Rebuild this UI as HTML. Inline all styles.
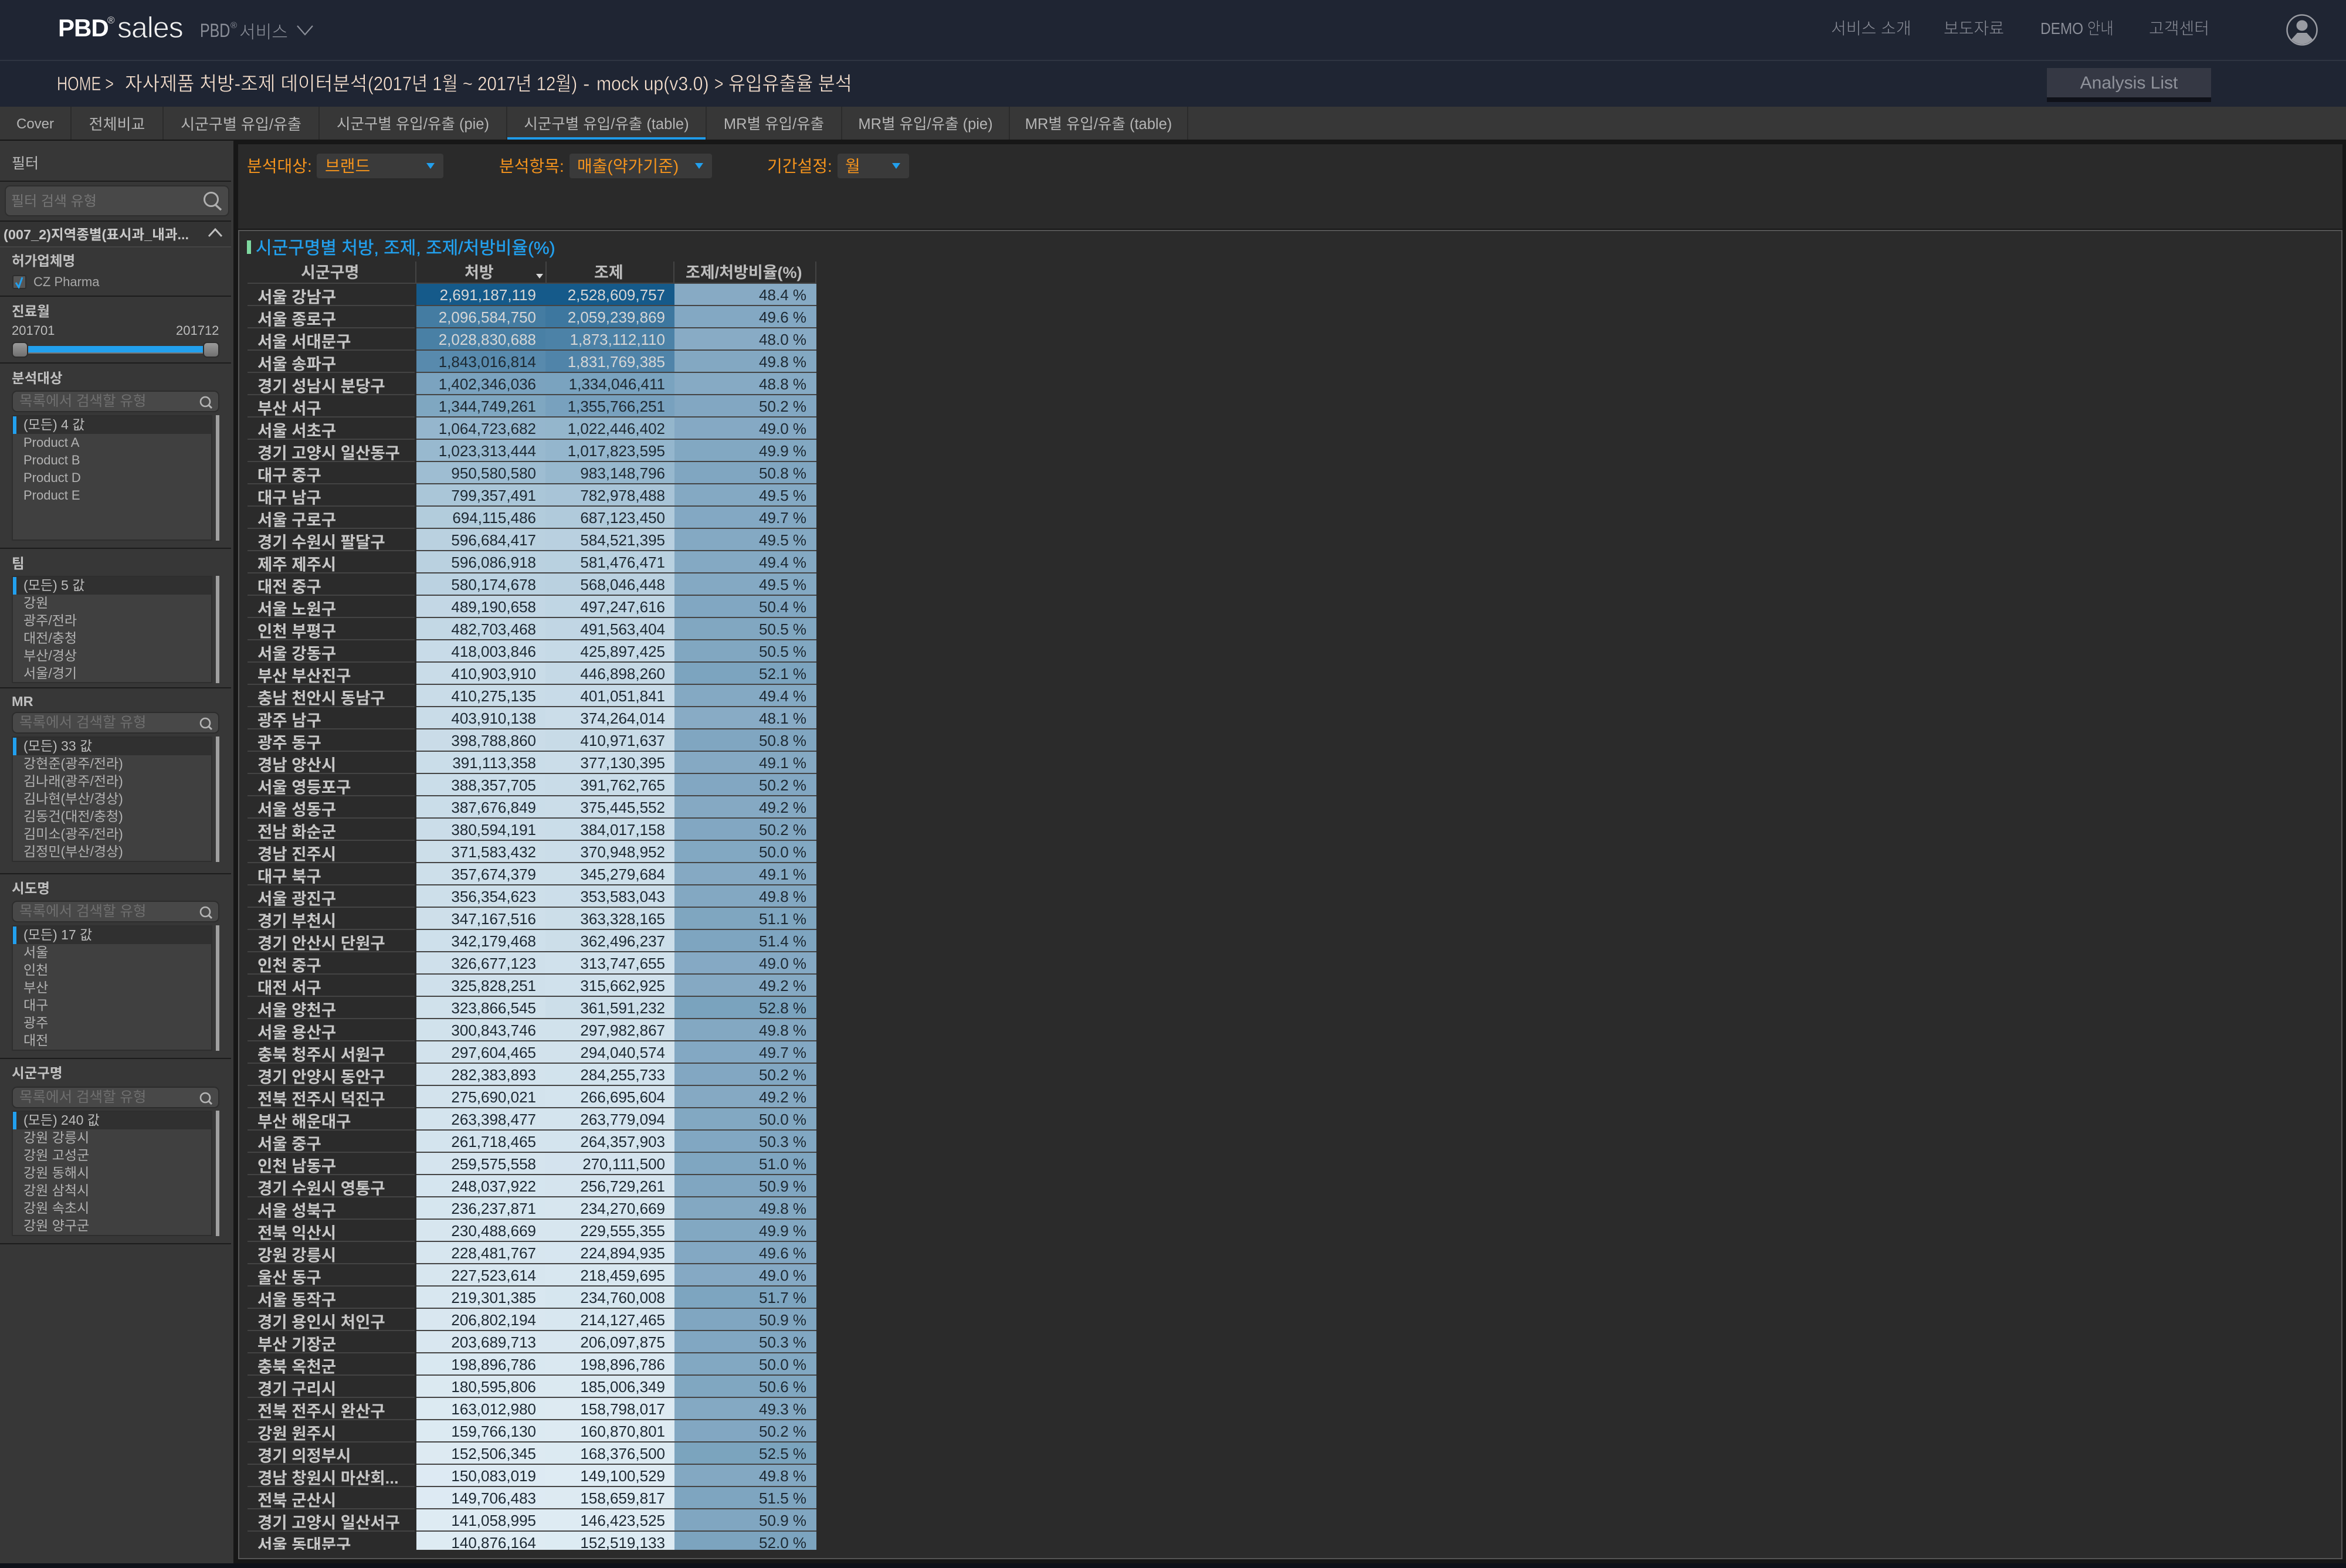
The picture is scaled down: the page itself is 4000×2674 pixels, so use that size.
<!DOCTYPE html>
<html lang="ko"><head><meta charset="utf-8"><title>PBD sales</title>
<style>
html,body{margin:0;padding:0;background:#171717}
#p{position:relative;width:4000px;height:2674px;overflow:hidden;background:#171717;font-family:"Liberation Sans","Noto Sans CJK KR",sans-serif}
.x{position:absolute}
.t{position:absolute;white-space:nowrap;line-height:40px}
.bc{position:absolute;top:123px;white-space:nowrap;line-height:40px;font-size:33px;color:#f6e0ce;-webkit-text-stroke:.5px #1f2533;transform-origin:0 50%}
.tab{position:absolute;top:182px;height:56px;background:#373737;text-align:center;font-size:26px;line-height:60px;color:#b5b5b5;white-space:nowrap}
.d{position:absolute;left:0;width:394px;height:2px;background:#1c1c1c}
.lb{position:absolute;left:20px;font-size:23.5px;font-weight:700;color:#c0c0c0;line-height:43px;white-space:nowrap}
.s{position:absolute;left:20px;width:354px;height:37px;box-sizing:border-box;background:#484848;border:2px solid #2c2c2c;border-radius:9px;color:#6f6f6f;font-size:24.5px;line-height:34px;padding-left:11px;white-space:nowrap}
.s svg{position:absolute;left:316px;top:6px}
.l{position:absolute;left:20px;width:342px;box-sizing:border-box;border:2px solid #2e2e2e;background:#404040;overflow:hidden;color:#b2b2b2;font-size:23px;white-space:nowrap}
.l div{height:30px;line-height:29px;padding-left:18px}
.l .f{background:#303030;color:#bdbdbd;border-left:6px solid #22a0ee;padding-left:12px}
.l .pr{font-size:22px}
.sb{position:absolute;left:368px;width:6px;background:#a0a0a0}
.or{color:#f5941d;font-size:28px}
.dd{position:absolute;top:262px;height:42px;background:#3a3a3a;border-radius:4px}
.tr{position:absolute;top:278px;width:0;height:0;border-left:7px solid transparent;border-right:7px solid transparent;border-top:10px solid #22a0ee}
.h{position:absolute;top:446px;height:36px;width:2px;background:#444}
.hh{position:absolute;font-weight:700;font-size:27px;color:#bdbdbd;line-height:42px;white-space:nowrap}
#tb{position:absolute;left:422px;top:484px;width:970px;height:2159px;overflow:hidden}
.r{display:flex;height:38px}
.n{width:268px;height:36px;padding-left:17px;margin-right:3px;border-bottom:2px solid #444;font-weight:700;font-size:27.5px;line-height:45px;color:#c6c6c6;white-space:nowrap;overflow:hidden}
.r i{display:block;font-style:normal;height:36px;border-bottom:2px solid #444;text-align:right;font-size:26px;line-height:38px;color:#1d2933;padding-right:16px}
.r .a,.r .b{width:204px;background:rgb(calc(222 - 201*var(--t)),calc(235 - 145*var(--t)),calc(243 - 105*var(--t)))}
.r .a{--t:calc((var(--v) - 140)/2551)}
.r .b{--t:calc((var(--v) - 146)/2383)}
.r .c{width:225px;padding-right:17px;--t:calc((var(--v) - 48)/4.8);background:rgb(calc(136 - 14*var(--t)),calc(171 - 8*var(--t)),calc(197 - 7*var(--t)))}
.r .w{color:#d6d6d6}
</style></head><body><div id="p">

<!-- header -->
<div class="x" style="left:0;top:0;width:4000px;height:182px;background:#1f2533"></div>
<div class="x" style="left:0;top:102px;width:4000px;height:2px;background:#2f3542"></div>
<div class="t" style="left:99px;top:28px;font-size:42px;font-weight:700;color:#fff;letter-spacing:-1px">PBD</div>
<div class="t" style="left:183px;top:15px;font-size:17px;color:#d8d8d8">®</div>
<div class="t" style="left:200px;top:27px;font-size:50px;color:#f0f0f0;-webkit-text-stroke:1px #1f2533;letter-spacing:-1px">sales</div>
<div class="t" style="left:341px;top:32px;font-size:32px;color:#8b8f99;transform:scaleX(.78);transform-origin:0 50%;font-weight:300">PBD</div>
<div class="t" style="left:393px;top:24px;font-size:15px;color:#8b8f99">®</div>
<div class="t" style="left:408px;top:32px;font-size:30px;color:#8b8f99;font-weight:300;font-family:'Noto Sans CJK KR',sans-serif">서비스</div>
<svg class="x" style="left:505px;top:42px" width="32" height="20"><path d="M2 2L15 17L28 2" fill="none" stroke="#8b8f99" stroke-width="2.2"/></svg>

<div class="bc" style="left:97px;transform:scaleX(.76)">HOME &gt;</div>
<div class="bc" style="left:213px;transform:scaleX(.975)">자사제품 처방-조제 데이터분석</div>
<div class="bc" style="left:627px;transform:scaleX(.89)">(2017년 1월 ~ 2017년 12월)</div>
<div class="bc" style="left:994px;transform:scaleX(1.05)">-</div>
<div class="bc" style="left:1017px;transform:scaleX(.916)">mock up(v3.0)</div>
<div class="bc" style="left:1218px;transform:scaleX(.8)">&gt;</div>
<div class="bc" style="left:1242px;transform:scaleX(.95)">유입유출율 분석</div>

<div class="t" style="left:3122px;top:29px;font-size:28px;color:#8b8e98;font-weight:300">서비스 소개</div>
<div class="t" style="left:3314px;top:29px;font-size:28px;color:#8b8e98;font-weight:300">보도자료</div>
<div class="t" style="left:3479px;top:29px;font-size:28px;color:#8b8e98;font-weight:300;transform:scaleX(.87);transform-origin:0 50%">DEMO 안내</div>
<div class="t" style="left:3664px;top:29px;font-size:28px;color:#8b8e98;font-weight:300">고객센터</div>
<svg class="x" style="left:3898px;top:24px" width="54" height="54"><circle cx="27" cy="27" r="25.5" fill="none" stroke="#9a9ca3" stroke-width="2.5"/><ellipse cx="27" cy="19.5" rx="9.5" ry="9" fill="#9a9ca3"/><path d="M19 32h16l10 11a24 24 0 0 1-36 0z" fill="#9a9ca3"/></svg>

<div class="x" style="left:3490px;top:116px;width:280px;height:50px;background:#353844;text-align:center;font-size:30px;line-height:52px;color:#8f929b">Analysis List</div>
<div class="x" style="left:3490px;top:166px;width:280px;height:8px;background:#0f1119"></div>

<!-- tabs -->
<div class="x" style="left:0;top:182px;width:4000px;height:56px;background:#373737"></div>
<div class="tab" style="left:0;width:120px;font-size:24px">Cover</div>
<div class="tab" style="left:122px;width:155px">전체비교</div>
<div class="tab" style="left:279px;width:264px">시군구별 유입/유출</div>
<div class="tab" style="left:545px;width:318px;font-size:25.5px">시군구별 유입/유출 (pie)</div>
<div class="tab" style="left:865px;width:338px;height:52px;border-bottom:4px solid #1f9ae8;font-size:25.5px">시군구별 유입/유출 (table)</div>
<div class="tab" style="left:1205px;width:229px;font-size:25.5px">MR별 유입/유출</div>
<div class="tab" style="left:1436px;width:284px;font-size:25.5px">MR별 유입/유출 (pie)</div>
<div class="tab" style="left:1722px;width:302px;font-size:25.5px">MR별 유입/유출 (table)</div>
<div class="x" style="left:120px;top:182px;width:2px;height:56px;background:#2b2b2b"></div>
<div class="x" style="left:277px;top:182px;width:2px;height:56px;background:#2b2b2b"></div>
<div class="x" style="left:543px;top:182px;width:2px;height:56px;background:#2b2b2b"></div>
<div class="x" style="left:863px;top:182px;width:2px;height:56px;background:#2b2b2b"></div>
<div class="x" style="left:1203px;top:182px;width:2px;height:56px;background:#2b2b2b"></div>
<div class="x" style="left:1434px;top:182px;width:2px;height:56px;background:#2b2b2b"></div>
<div class="x" style="left:1720px;top:182px;width:2px;height:56px;background:#2b2b2b"></div>
<div class="x" style="left:2024px;top:182px;width:2px;height:56px;background:#2b2b2b"></div>

<!-- sidebar -->
<div class="x" style="left:0;top:240px;width:398px;height:2426px;background:#373737"></div>
<div class="t" style="left:20px;top:259px;font-size:25px;color:#bcbcbc">필터</div>
<div class="d" style="top:308px"></div>
<div class="x" style="left:8px;top:316px;width:383px;height:53px;box-sizing:border-box;background:#484848;border:2px solid #2e2e2e;border-radius:9px"></div>
<div class="t" style="left:19px;top:324px;font-size:24px;color:#757575">필터 검색 유형</div>
<svg class="x" style="left:344px;top:325px" width="36" height="36"><circle cx="16" cy="15" r="11.5" fill="none" stroke="#b0b0b0" stroke-width="3"/><path d="M23 24L33 33" stroke="#b0b0b0" stroke-width="3.5"/></svg>
<div class="d" style="top:376px"></div>
<div class="x" style="left:0;top:378px;width:394px;height:42px;background:#333"></div>
<div class="x" style="left:0;top:420px;width:394px;height:2px;background:#444"></div>
<div class="t" style="left:6px;top:380px;font-size:23.5px;font-weight:700;color:#c8c8c8">(007_2)지역종별(표시과_내과...</div>
<svg class="x" style="left:353px;top:388px" width="28" height="18"><path d="M3 15L14 3L25 15" fill="none" stroke="#c0c0c0" stroke-width="3"/></svg>

<div class="lb" style="top:424px">허가업체명</div>
<div class="x" style="left:21px;top:469px;width:24px;height:24px;box-sizing:border-box;background:#565656;border:2px solid #2d2d2d;border-radius:3px"></div>
<svg class="x" style="left:24px;top:470px" width="18" height="22"><path d="M3 12L8 20L14 3" fill="none" stroke="#22a0ee" stroke-width="3"/></svg>
<div class="t" style="left:57px;top:461px;font-size:22px;color:#a8a8a8">CZ Pharma</div>
<div class="d" style="top:504px"></div>

<div class="lb" style="top:510px">진료월</div>
<div class="t" style="left:20px;top:544px;font-size:22px;color:#bdbdbd">201701</div>
<div class="t" style="left:300px;top:544px;font-size:22px;color:#bdbdbd">201712</div>
<div class="x" style="left:47px;top:590px;width:300px;height:13px;background:linear-gradient(#22a0ee 85%,#777 85%)"></div>
<div class="x" style="left:20px;top:583px;width:28px;height:27px;box-sizing:border-box;background:linear-gradient(#9a9a9a,#707070);border:2px solid #2d2d2d;border-radius:7px"></div>
<div class="x" style="left:346px;top:583px;width:28px;height:27px;box-sizing:border-box;background:linear-gradient(#9a9a9a,#707070);border:2px solid #2d2d2d;border-radius:7px"></div>
<div class="d" style="top:618px"></div>

<div class="lb" style="top:624px">분석대상</div>
<div class="s" style="top:666px">목록에서 검색할 유형<svg width="24" height="24"><circle cx="12" cy="11" r="8" fill="none" stroke="#b5b5b5" stroke-width="2.6"/><path d="M17 16L23 22" stroke="#b5b5b5" stroke-width="3"/></svg></div>
<div class="l" style="top:708px;height:214px"><div class="f">(모든) 4 값</div><div class="pr">Product A</div><div class="pr">Product B</div><div class="pr">Product D</div><div class="pr">Product E</div></div>
<div class="sb" style="top:708px;height:214px"></div>
<div class="d" style="top:934px"></div>

<div class="lb" style="top:940px">팀</div>
<div class="l" style="top:982px;height:183px"><div class="f">(모든) 5 값</div><div>강원</div><div>광주/전라</div><div>대전/충청</div><div>부산/경상</div><div>서울/경기</div></div>
<div class="sb" style="top:982px;height:183px"></div>
<div class="d" style="top:1172px"></div>

<div class="lb" style="top:1175px">MR</div>
<div class="s" style="top:1214px">목록에서 검색할 유형<svg width="24" height="24"><circle cx="12" cy="11" r="8" fill="none" stroke="#b5b5b5" stroke-width="2.6"/><path d="M17 16L23 22" stroke="#b5b5b5" stroke-width="3"/></svg></div>
<div class="l" style="top:1256px;height:214px"><div class="f">(모든) 33 값</div><div>강현준(광주/전라)</div><div>김나래(광주/전라)</div><div>김나현(부산/경상)</div><div>김동건(대전/충청)</div><div>김미소(광주/전라)</div><div>김정민(부산/경상)</div></div>
<div class="sb" style="top:1256px;height:214px"></div>
<div class="d" style="top:1489px"></div>

<div class="lb" style="top:1494px">시도명</div>
<div class="s" style="top:1536px">목록에서 검색할 유형<svg width="24" height="24"><circle cx="12" cy="11" r="8" fill="none" stroke="#b5b5b5" stroke-width="2.6"/><path d="M17 16L23 22" stroke="#b5b5b5" stroke-width="3"/></svg></div>
<div class="l" style="top:1578px;height:214px"><div class="f">(모든) 17 값</div><div>서울</div><div>인천</div><div>부산</div><div>대구</div><div>광주</div><div>대전</div></div>
<div class="sb" style="top:1578px;height:214px"></div>
<div class="d" style="top:1804px"></div>

<div class="lb" style="top:1809px">시군구명</div>
<div class="s" style="top:1853px">목록에서 검색할 유형<svg width="24" height="24"><circle cx="12" cy="11" r="8" fill="none" stroke="#b5b5b5" stroke-width="2.6"/><path d="M17 16L23 22" stroke="#b5b5b5" stroke-width="3"/></svg></div>
<div class="l" style="top:1894px;height:214px"><div class="f">(모든) 240 값</div><div>강원 강릉시</div><div>강원 고성군</div><div>강원 동해시</div><div>강원 삼척시</div><div>강원 속초시</div><div>강원 양구군</div></div>
<div class="sb" style="top:1894px;height:214px"></div>
<div class="d" style="top:2120px"></div>

<!-- main -->
<div class="x" style="left:406px;top:246px;width:3588px;height:144px;background:#2a2a2a"></div>
<div class="x" style="left:406px;top:392px;width:3588px;height:2267px;box-sizing:border-box;background:#2b2b2b;border:2px solid #555"></div>
<div class="x" style="left:0;top:2666px;width:4000px;height:8px;background:#0e1119"></div>

<div class="t or" style="left:421px;top:264px">분석대상:</div>
<div class="dd" style="left:540px;width:216px"></div>
<div class="t or" style="left:554px;top:264px">브랜드</div>
<div class="tr" style="left:727px"></div>
<div class="t or" style="left:851px;top:264px">분석항목:</div>
<div class="dd" style="left:971px;width:243px"></div>
<div class="t or" style="left:984px;top:264px">매출(약가기준)</div>
<div class="tr" style="left:1185px"></div>
<div class="t or" style="left:1308px;top:264px">기간설정:</div>
<div class="dd" style="left:1428px;width:122px"></div>
<div class="t or" style="left:1441px;top:264px">월</div>
<div class="tr" style="left:1521px"></div>

<div class="x" style="left:421px;top:410px;width:7px;height:23px;background:#7fd9a0"></div>
<div class="t" style="left:436px;top:404px;font-size:30px;color:#22a0ee;-webkit-text-stroke:.4px #22a0ee">시군구명별 처방, 조제, 조제/처방비율(%)</div>

<div class="h" style="left:708px"></div><div class="h" style="left:930px"></div><div class="h" style="left:1148px"></div><div class="h" style="left:1390px"></div>
<div class="x" style="left:422px;top:482px;width:970px;height:2px;background:#444"></div>
<div class="hh" style="left:513px;top:444px">시군구명</div>
<div class="hh" style="left:792px;top:444px">처방</div>
<div class="hh" style="left:1013px;top:444px">조제</div>
<div class="hh" style="left:1169px;top:444px">조제/처방비율(%)</div>
<div class="x" style="left:914px;top:467px;width:0;height:0;border-left:6px solid transparent;border-right:6px solid transparent;border-top:8px solid #d8d8d8"></div>

<div id="tb">
<div class="r"><div class="n">서울 강남구</div><i class="a w" style="--v:2691">2,691,187,119</i><i class="b w" style="--v:2529">2,528,609,757</i><i class="c" style="--v:48.4">48.4 %</i></div>
<div class="r"><div class="n">서울 종로구</div><i class="a w" style="--v:2097">2,096,584,750</i><i class="b w" style="--v:2059">2,059,239,869</i><i class="c" style="--v:49.6">49.6 %</i></div>
<div class="r"><div class="n">서울 서대문구</div><i class="a w" style="--v:2029">2,028,830,688</i><i class="b w" style="--v:1873">1,873,112,110</i><i class="c" style="--v:48.0">48.0 %</i></div>
<div class="r"><div class="n">서울 송파구</div><i class="a" style="--v:1843">1,843,016,814</i><i class="b w" style="--v:1832">1,831,769,385</i><i class="c" style="--v:49.8">49.8 %</i></div>
<div class="r"><div class="n">경기 성남시 분당구</div><i class="a" style="--v:1402">1,402,346,036</i><i class="b" style="--v:1334">1,334,046,411</i><i class="c" style="--v:48.8">48.8 %</i></div>
<div class="r"><div class="n">부산 서구</div><i class="a" style="--v:1345">1,344,749,261</i><i class="b" style="--v:1356">1,355,766,251</i><i class="c" style="--v:50.2">50.2 %</i></div>
<div class="r"><div class="n">서울 서초구</div><i class="a" style="--v:1065">1,064,723,682</i><i class="b" style="--v:1022">1,022,446,402</i><i class="c" style="--v:49.0">49.0 %</i></div>
<div class="r"><div class="n">경기 고양시 일산동구</div><i class="a" style="--v:1023">1,023,313,444</i><i class="b" style="--v:1018">1,017,823,595</i><i class="c" style="--v:49.9">49.9 %</i></div>
<div class="r"><div class="n">대구 중구</div><i class="a" style="--v:951">950,580,580</i><i class="b" style="--v:983">983,148,796</i><i class="c" style="--v:50.8">50.8 %</i></div>
<div class="r"><div class="n">대구 남구</div><i class="a" style="--v:799">799,357,491</i><i class="b" style="--v:783">782,978,488</i><i class="c" style="--v:49.5">49.5 %</i></div>
<div class="r"><div class="n">서울 구로구</div><i class="a" style="--v:694">694,115,486</i><i class="b" style="--v:687">687,123,450</i><i class="c" style="--v:49.7">49.7 %</i></div>
<div class="r"><div class="n">경기 수원시 팔달구</div><i class="a" style="--v:597">596,684,417</i><i class="b" style="--v:585">584,521,395</i><i class="c" style="--v:49.5">49.5 %</i></div>
<div class="r"><div class="n">제주 제주시</div><i class="a" style="--v:596">596,086,918</i><i class="b" style="--v:581">581,476,471</i><i class="c" style="--v:49.4">49.4 %</i></div>
<div class="r"><div class="n">대전 중구</div><i class="a" style="--v:580">580,174,678</i><i class="b" style="--v:568">568,046,448</i><i class="c" style="--v:49.5">49.5 %</i></div>
<div class="r"><div class="n">서울 노원구</div><i class="a" style="--v:489">489,190,658</i><i class="b" style="--v:497">497,247,616</i><i class="c" style="--v:50.4">50.4 %</i></div>
<div class="r"><div class="n">인천 부평구</div><i class="a" style="--v:483">482,703,468</i><i class="b" style="--v:492">491,563,404</i><i class="c" style="--v:50.5">50.5 %</i></div>
<div class="r"><div class="n">서울 강동구</div><i class="a" style="--v:418">418,003,846</i><i class="b" style="--v:426">425,897,425</i><i class="c" style="--v:50.5">50.5 %</i></div>
<div class="r"><div class="n">부산 부산진구</div><i class="a" style="--v:411">410,903,910</i><i class="b" style="--v:447">446,898,260</i><i class="c" style="--v:52.1">52.1 %</i></div>
<div class="r"><div class="n">충남 천안시 동남구</div><i class="a" style="--v:410">410,275,135</i><i class="b" style="--v:401">401,051,841</i><i class="c" style="--v:49.4">49.4 %</i></div>
<div class="r"><div class="n">광주 남구</div><i class="a" style="--v:404">403,910,138</i><i class="b" style="--v:374">374,264,014</i><i class="c" style="--v:48.1">48.1 %</i></div>
<div class="r"><div class="n">광주 동구</div><i class="a" style="--v:399">398,788,860</i><i class="b" style="--v:411">410,971,637</i><i class="c" style="--v:50.8">50.8 %</i></div>
<div class="r"><div class="n">경남 양산시</div><i class="a" style="--v:391">391,113,358</i><i class="b" style="--v:377">377,130,395</i><i class="c" style="--v:49.1">49.1 %</i></div>
<div class="r"><div class="n">서울 영등포구</div><i class="a" style="--v:388">388,357,705</i><i class="b" style="--v:392">391,762,765</i><i class="c" style="--v:50.2">50.2 %</i></div>
<div class="r"><div class="n">서울 성동구</div><i class="a" style="--v:388">387,676,849</i><i class="b" style="--v:375">375,445,552</i><i class="c" style="--v:49.2">49.2 %</i></div>
<div class="r"><div class="n">전남 화순군</div><i class="a" style="--v:381">380,594,191</i><i class="b" style="--v:384">384,017,158</i><i class="c" style="--v:50.2">50.2 %</i></div>
<div class="r"><div class="n">경남 진주시</div><i class="a" style="--v:372">371,583,432</i><i class="b" style="--v:371">370,948,952</i><i class="c" style="--v:50.0">50.0 %</i></div>
<div class="r"><div class="n">대구 북구</div><i class="a" style="--v:358">357,674,379</i><i class="b" style="--v:345">345,279,684</i><i class="c" style="--v:49.1">49.1 %</i></div>
<div class="r"><div class="n">서울 광진구</div><i class="a" style="--v:356">356,354,623</i><i class="b" style="--v:354">353,583,043</i><i class="c" style="--v:49.8">49.8 %</i></div>
<div class="r"><div class="n">경기 부천시</div><i class="a" style="--v:347">347,167,516</i><i class="b" style="--v:363">363,328,165</i><i class="c" style="--v:51.1">51.1 %</i></div>
<div class="r"><div class="n">경기 안산시 단원구</div><i class="a" style="--v:342">342,179,468</i><i class="b" style="--v:362">362,496,237</i><i class="c" style="--v:51.4">51.4 %</i></div>
<div class="r"><div class="n">인천 중구</div><i class="a" style="--v:327">326,677,123</i><i class="b" style="--v:314">313,747,655</i><i class="c" style="--v:49.0">49.0 %</i></div>
<div class="r"><div class="n">대전 서구</div><i class="a" style="--v:326">325,828,251</i><i class="b" style="--v:316">315,662,925</i><i class="c" style="--v:49.2">49.2 %</i></div>
<div class="r"><div class="n">서울 양천구</div><i class="a" style="--v:324">323,866,545</i><i class="b" style="--v:362">361,591,232</i><i class="c" style="--v:52.8">52.8 %</i></div>
<div class="r"><div class="n">서울 용산구</div><i class="a" style="--v:301">300,843,746</i><i class="b" style="--v:298">297,982,867</i><i class="c" style="--v:49.8">49.8 %</i></div>
<div class="r"><div class="n">충북 청주시 서원구</div><i class="a" style="--v:298">297,604,465</i><i class="b" style="--v:294">294,040,574</i><i class="c" style="--v:49.7">49.7 %</i></div>
<div class="r"><div class="n">경기 안양시 동안구</div><i class="a" style="--v:282">282,383,893</i><i class="b" style="--v:284">284,255,733</i><i class="c" style="--v:50.2">50.2 %</i></div>
<div class="r"><div class="n">전북 전주시 덕진구</div><i class="a" style="--v:276">275,690,021</i><i class="b" style="--v:267">266,695,604</i><i class="c" style="--v:49.2">49.2 %</i></div>
<div class="r"><div class="n">부산 해운대구</div><i class="a" style="--v:263">263,398,477</i><i class="b" style="--v:264">263,779,094</i><i class="c" style="--v:50.0">50.0 %</i></div>
<div class="r"><div class="n">서울 중구</div><i class="a" style="--v:262">261,718,465</i><i class="b" style="--v:264">264,357,903</i><i class="c" style="--v:50.3">50.3 %</i></div>
<div class="r"><div class="n">인천 남동구</div><i class="a" style="--v:260">259,575,558</i><i class="b" style="--v:270">270,111,500</i><i class="c" style="--v:51.0">51.0 %</i></div>
<div class="r"><div class="n">경기 수원시 영통구</div><i class="a" style="--v:248">248,037,922</i><i class="b" style="--v:257">256,729,261</i><i class="c" style="--v:50.9">50.9 %</i></div>
<div class="r"><div class="n">서울 성북구</div><i class="a" style="--v:236">236,237,871</i><i class="b" style="--v:234">234,270,669</i><i class="c" style="--v:49.8">49.8 %</i></div>
<div class="r"><div class="n">전북 익산시</div><i class="a" style="--v:230">230,488,669</i><i class="b" style="--v:230">229,555,355</i><i class="c" style="--v:49.9">49.9 %</i></div>
<div class="r"><div class="n">강원 강릉시</div><i class="a" style="--v:228">228,481,767</i><i class="b" style="--v:225">224,894,935</i><i class="c" style="--v:49.6">49.6 %</i></div>
<div class="r"><div class="n">울산 동구</div><i class="a" style="--v:228">227,523,614</i><i class="b" style="--v:218">218,459,695</i><i class="c" style="--v:49.0">49.0 %</i></div>
<div class="r"><div class="n">서울 동작구</div><i class="a" style="--v:219">219,301,385</i><i class="b" style="--v:235">234,760,008</i><i class="c" style="--v:51.7">51.7 %</i></div>
<div class="r"><div class="n">경기 용인시 처인구</div><i class="a" style="--v:207">206,802,194</i><i class="b" style="--v:214">214,127,465</i><i class="c" style="--v:50.9">50.9 %</i></div>
<div class="r"><div class="n">부산 기장군</div><i class="a" style="--v:204">203,689,713</i><i class="b" style="--v:206">206,097,875</i><i class="c" style="--v:50.3">50.3 %</i></div>
<div class="r"><div class="n">충북 옥천군</div><i class="a" style="--v:199">198,896,786</i><i class="b" style="--v:199">198,896,786</i><i class="c" style="--v:50.0">50.0 %</i></div>
<div class="r"><div class="n">경기 구리시</div><i class="a" style="--v:181">180,595,806</i><i class="b" style="--v:185">185,006,349</i><i class="c" style="--v:50.6">50.6 %</i></div>
<div class="r"><div class="n">전북 전주시 완산구</div><i class="a" style="--v:163">163,012,980</i><i class="b" style="--v:159">158,798,017</i><i class="c" style="--v:49.3">49.3 %</i></div>
<div class="r"><div class="n">강원 원주시</div><i class="a" style="--v:160">159,766,130</i><i class="b" style="--v:161">160,870,801</i><i class="c" style="--v:50.2">50.2 %</i></div>
<div class="r"><div class="n">경기 의정부시</div><i class="a" style="--v:153">152,506,345</i><i class="b" style="--v:168">168,376,500</i><i class="c" style="--v:52.5">52.5 %</i></div>
<div class="r"><div class="n">경남 창원시 마산회...</div><i class="a" style="--v:150">150,083,019</i><i class="b" style="--v:149">149,100,529</i><i class="c" style="--v:49.8">49.8 %</i></div>
<div class="r"><div class="n">전북 군산시</div><i class="a" style="--v:150">149,706,483</i><i class="b" style="--v:159">158,659,817</i><i class="c" style="--v:51.5">51.5 %</i></div>
<div class="r"><div class="n">경기 고양시 일산서구</div><i class="a" style="--v:141">141,058,995</i><i class="b" style="--v:146">146,423,525</i><i class="c" style="--v:50.9">50.9 %</i></div>
<div class="r"><div class="n">서울 동대문구</div><i class="a" style="--v:141">140,876,164</i><i class="b" style="--v:153">152,519,133</i><i class="c" style="--v:52.0">52.0 %</i></div>
</div>

</div></body></html>
